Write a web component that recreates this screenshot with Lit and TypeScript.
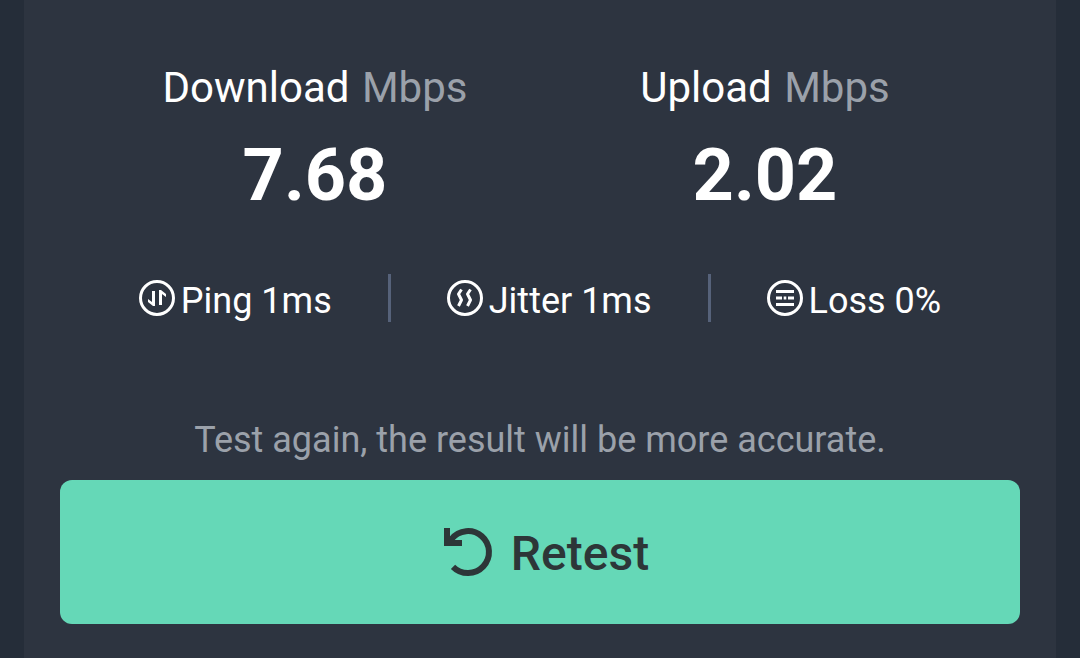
import { LitElement, html, css, svg } from "lit";
import { customElement } from "lit/decorators.js";

const ring = svg`<circle cx="18" cy="18" r="16.5" stroke-width="3" />`;

@customElement("app-root")
export class AppRoot extends LitElement {
  static styles = css`
    :host { display: block; min-height: 100vh; padding: 0 24px; box-sizing: border-box; background: #252d39; color: #fff; font-family: Roboto, sans-serif; }
    .panel { box-sizing: border-box; min-height: 100vh; padding: 60px 36px 34px; background: #2d3440; }
    .speeds { display: grid; grid-template-columns: 1fr 1fr; padding: 0 30px; text-align: center; }
    h2 { margin: 0; font-size: 42px; line-height: 56px; font-weight: 400; }
    .unit { margin-left: 2px; color: #9ba1aa; }
    .value { margin: 0; font-size: 72px; line-height: 120px; font-weight: 700; }
    .metrics { display: flex; justify-content: center; margin: 38px 0 0; padding: 0; list-style: none; }
    .metric { display: flex; align-items: center; gap: 6px; height: 48px; padding: 0 56px; font-size: 36px; line-height: 42px; }
    .metric span { padding-top: 6px; }
    .metric + .metric { border-left: 3px solid #56627a; }
    .icon { width: 36px; height: 36px; fill: none; stroke: currentColor; stroke-width: 3; flex: none; }
    .hint { margin: 93px 0 15px; color: #9ba1aa; font-size: 36px; line-height: 50px; text-align: center; }
    button { display: flex; align-items: center; justify-content: center; gap: 18px; width: 100%; height: 144px; padding: 0 0 0 12px; border: 0; border-radius: 12px; background: #65d8b7; color: #2d3638; font: 500 48px/56px Roboto, sans-serif; cursor: pointer; }
    button span { padding-top: 4px; }
    .retry { width: 50px; height: 50px; fill: none; stroke: currentColor; stroke-width: 6; }
  `;

  render() {
    return html`<main class="panel">
      <div class="speeds">
        <section><h2>Download <span class="unit">Mbps</span></h2><p class="value">7.68</p></section>
        <section><h2>Upload <span class="unit">Mbps</span></h2><p class="value">2.02</p></section>
      </div>
      <ul class="metrics">
        <li class="metric"><svg class="icon" viewBox="0 0 36 36" aria-hidden="true">${ring}<path d="M13 11h3v15h-2l-5-4v-3l4 3zM20 10h2l5 4v3l-4-3v11h-3z" fill="currentColor" stroke="none" /></svg><span>Ping 1ms</span></li>
        <li class="metric"><svg class="icon" viewBox="0 0 36 36" aria-hidden="true">${ring}<path d="M14.5 9.5L11.5 14L14.5 20L11.5 26M23.5 9.5L20.5 14L23.5 20L20.5 26" stroke-linejoin="round" /></svg><span>Jitter 1ms</span></li>
        <li class="metric"><svg class="icon" viewBox="0 0 36 36" aria-hidden="true">${ring}<path d="M9 11.5h18M9 18h6M21 18h6M9 24.5h18M16.7 18h2.6" /></svg><span>Loss 0%</span></li>
      </ul>
      <p class="hint">Test again, the result will be more accurate.</p>
      <button type="button"><svg class="retry" viewBox="0 0 50 50" aria-hidden="true"><path d="M8.5 12A21 21 0 1 1 10 39.8" /><path d="M1 1h6v9l5 3h7v6H1z" fill="currentColor" stroke="none" /></svg><span>Retest</span></button>
    </main>`;
  }
}
